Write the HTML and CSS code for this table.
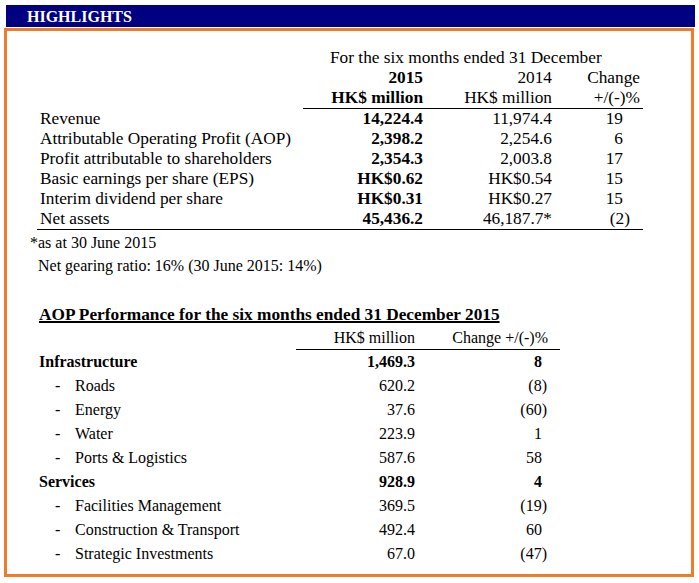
FILE: index.html
```html
<!DOCTYPE html>
<html>
<head>
<meta charset="utf-8">
<link rel="stylesheet" href="styles.css">
</head>
<body>
<div class="bar">HIGHLIGHTS</div>
<div class="box">
  <table class="t1">
    <colgroup><col class="c-label"><col class="c-a"><col class="c-b"><col class="c-c"></colgroup>
    <tr><td></td><td colspan="3" class="period">For the six months ended 31 December</td></tr>
    <tr><td></td><td class="num b">2015</td><td class="num">2014</td><td class="num hd">Change</td></tr>
    <tr class="hrow"><td class="nl"></td><td class="num b">HK$ million</td><td class="num">HK$ million</td><td class="num hd">+/(-)%</td></tr>
    <tr><td class="lab">Revenue</td><td class="num b">14,224.4</td><td class="num">11,974.4</td><td class="num ch">19</td></tr>
    <tr><td class="lab">Attributable Operating Profit (AOP)</td><td class="num b">2,398.2</td><td class="num">2,254.6</td><td class="num ch">6</td></tr>
    <tr><td class="lab">Profit attributable to shareholders</td><td class="num b">2,354.3</td><td class="num">2,003.8</td><td class="num ch">17</td></tr>
    <tr><td class="lab">Basic earnings per share (EPS)</td><td class="num b">HK$0.62</td><td class="num">HK$0.54</td><td class="num ch">15</td></tr>
    <tr><td class="lab">Interim dividend per share</td><td class="num b">HK$0.31</td><td class="num">HK$0.27</td><td class="num ch">15</td></tr>
    <tr class="last"><td class="lab">Net assets</td><td class="num b">45,436.2</td><td class="num">46,187.7*</td><td class="num ch"><span class="neg">(2)</span></td></tr>
  </table>
  <p class="foot">*as at 30 June 2015</p>
  <p class="gear">Net gearing ratio: 16% (30 June 2015: 14%)</p>

  <h2 class="title">AOP Performance for the six months ended 31 December 2015</h2>
  <table class="t2">
    <colgroup><col class="d-label"><col class="d-a"><col class="d-b"></colgroup>
    <tr class="hrow"><td class="nl"></td><td class="num">HK$ million</td><td class="num hd">Change +/(-)%</td></tr>
    <tr class="grp"><td>Infrastructure</td><td class="num">1,469.3</td><td class="num ch">8</td></tr>
    <tr><td><span class="dash">-</span>Roads</td><td class="num">620.2</td><td class="num ch"><span class="neg">(8)</span></td></tr>
    <tr><td><span class="dash">-</span>Energy</td><td class="num">37.6</td><td class="num ch"><span class="neg">(60)</span></td></tr>
    <tr><td><span class="dash">-</span>Water</td><td class="num">223.9</td><td class="num ch">1</td></tr>
    <tr><td><span class="dash">-</span>Ports &amp; Logistics</td><td class="num">587.6</td><td class="num ch">58</td></tr>
    <tr class="grp"><td>Services</td><td class="num">928.9</td><td class="num ch">4</td></tr>
    <tr><td><span class="dash">-</span>Facilities Management</td><td class="num">369.5</td><td class="num ch"><span class="neg">(19)</span></td></tr>
    <tr><td><span class="dash">-</span>Construction &amp; Transport</td><td class="num">492.4</td><td class="num ch">60</td></tr>
    <tr><td><span class="dash">-</span>Strategic Investments</td><td class="num">67.0</td><td class="num ch"><span class="neg">(47)</span></td></tr>
  </table>
</div>
</body>
</html>
```
FILE: styles.css
```css
html, body {
  margin: 0;
  padding: 0;
  background: #ffffff;
  color: #000000;
  font-family: "Liberation Serif", "Times New Roman", serif;
}
.bar {
  margin: 5px 4px 0 6px;
  height: 22px;
  line-height: 23px;
  background: #000080;
  color: #ffffff;
  font-weight: bold;
  font-size: 16px;
  padding-left: 21px;
}
.box {
  margin: 1px 5px 0 4px;
  height: 526px;
  border: 3px solid #f07c2a;
  padding-top: 17px;
  box-sizing: content-box;
}
table {
  border-collapse: collapse;
  border-spacing: 0;
}
td {
  padding: 0;
  white-space: nowrap;
}
.t1 {
  margin-left: 30px;
  table-layout: fixed;
  width: 606px;
  font-size: 17.3px;
  line-height: 20px;
}
.c-label { width: 266px; }
.c-a { width: 120px; }
.c-b { width: 129px; }
.c-c { width: 91px; }
.t1 .period { padding-left: 27px; }
.num { text-align: right; }
.b { font-weight: bold; }
.t1 .hd { padding-right: 3px; }
.t1 .ch { padding-right: 20px; }
.neg { margin-right: -7px; }
.t1 .lab { padding-left: 3px; }
.t1 .hrow td { border-bottom: 1px solid #000; }
.t1 .hrow td.nl { border-bottom: none; }
.t1 .last td { border-bottom: 1px solid #000; }
.foot {
  margin: 3px 0 0 23px;
  font-size: 16px;
  line-height: 20px;
}
.gear {
  margin: 3px 0 0 31px;
  font-size: 16px;
  line-height: 20px;
}
.title {
  margin: 29px 0 0 32px;
  font-size: 17.3px;
  line-height: 20px;
  font-weight: bold;
  text-decoration: underline;
  text-decoration-thickness: 2px;
}
.t2 {
  margin: 1px 0 0 32px;
  table-layout: fixed;
  width: 521px;
  font-size: 16px;
  line-height: 24px;
}
.d-label { width: 257px; }
.d-a { width: 119px; }
.d-b { width: 145px; }
.t2 .hrow td { border-bottom: 1px solid #000; line-height: 23px; }
.t2 .hrow td.nl { border-bottom: none; }
.t2 .hd { padding-right: 12px; }
.t2 .ch { padding-right: 18px; }
.t2 .neg { margin-right: -5px; }
.grp td { font-weight: bold; }
.dash {
  display: inline-block;
  width: 20px;
  padding-left: 16px;
}
```
